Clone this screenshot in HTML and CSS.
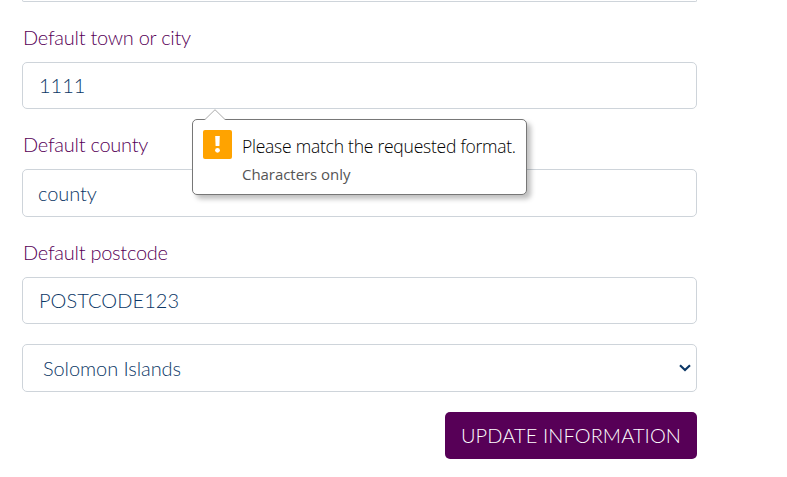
FILE: index.html
```html
<!DOCTYPE html>
<html lang="en">
<head>
<meta charset="utf-8">
<title>Update information</title>
<link rel="stylesheet" href="styles.css">
</head>
<body>
<form class="form">
  <div class="previous"></div>
  <label class="label town-label" for="town">Default town or city</label>
  <div class="field">
    <input class="control town" id="town" value="1111">
    <div class="bubble">
      <svg class="arrow" width="22" height="12" viewBox="0 0 22 12"><path d="M0 11.5 1 10.5 11 .7 21 10.5 22 11.5V12H0Z" fill="#fff"/><path d="M1 10.5 11 .7 21 10.5" fill="none" stroke="#aaa"/></svg>
      <svg class="warning" width="29" height="29" viewBox="0 0 29 29"><rect width="29" height="29" rx="2" fill="#ffa300"/><path d="M12.2 6h4.6l-.4 10h-3.8z" fill="#fff"/><circle cx="14.5" cy="20.3" r="2.4" fill="#fff"/></svg>
      <div class="message">
        <div class="title"><span>Please match the requested format.</span></div>
        <div class="hint"><span>Characters only</span></div>
      </div>
    </div>
  </div>
  <label class="label county-label" for="county">Default county</label>
  <input class="control tall county" id="county" value="county">
  <label class="label postcode-label" for="postcode">Default postcode</label>
  <input class="control postcode" id="postcode" value="POSTCODE123">
  <div class="control tall select"><span>Solomon Islands</span><svg width="12" height="8" viewBox="0 0 12 8"><path d="m1 1.3 5 4.7 5-4.7" fill="none" stroke="#0b3766" stroke-width="2.2"/></svg></div>
  <button class="submit" type="button"><span>UPDATE INFORMATION</span></button>
</form>
</body>
</html>
```
FILE: styles.css
```css
* { box-sizing: border-box; }
body { margin: 0; background: #fff; overflow: hidden; }
.form {
  display: flex;
  flex-direction: column;
  width: 675px;
  margin-left: 22px;
  font: 300 20px/30px Lato, sans-serif;
}
.previous {
  height: 2px;
  border: 1px solid #ced4da;
  border-top: 0;
  border-radius: 0 0 5px 5px;
}
.label { height: 30px; padding-left: 1px; color: #570057; letter-spacing: -.26px; }
.town-label { margin: 20px 0 10px; }
.county-label { margin: 20px 0 10px; }
.postcode-label { margin: 20px 0 10px; }
.field { position: relative; height: 47px; }
.control {
  display: block;
  width: 675px;
  height: 47px;
  margin: 0;
  padding: 0 16px 2px;
  border: 1px solid #ced4da;
  border-radius: 5px;
  background: #fff;
  color: #0b3766;
  font: inherit;
  outline: 0;
}
.tall { height: 48px; }
.county { padding: 0 16px 0 15px; letter-spacing: -.05px; }
.postcode { letter-spacing: .05px; }
.select {
  display: flex;
  align-items: center;
  justify-content: space-between;
  margin-top: 20px;
  padding: 0 5px 0 20px;
  letter-spacing: -.07px;
}
.submit {
  align-self: flex-end;
  width: 252px;
  height: 47px;
  margin-top: 20px;
  padding: 0 0 2px;
  border: 0;
  border-radius: 5px;
  background: #570057;
  color: #fff;
  font: inherit;
  letter-spacing: .1px;
  white-space: nowrap;
}
.bubble {
  position: absolute;
  z-index: 1;
  left: 170px;
  top: 57px;
  display: flex;
  width: 335px;
  height: 76px;
  padding: 10px;
  border: 1px solid #777;
  border-radius: 5px;
  background: #fff;
  box-shadow: 4px 4px 5px rgba(0, 0, 0, .25);
  font-family: "Open Sans", "Noto Sans", sans-serif;
}
.arrow { position: absolute; left: 11px; top: -11px; }
.warning { flex: none; }
.message { margin-left: 10px; white-space: nowrap; }
.title { height: 32px; color: #000; font-size: 17.5px; line-height: 33px; letter-spacing: -.24px; }
.hint { height: 24px; color: #555; font-size: 15px; font-weight: 400; line-height: 24px; letter-spacing: -.05px; }
```
